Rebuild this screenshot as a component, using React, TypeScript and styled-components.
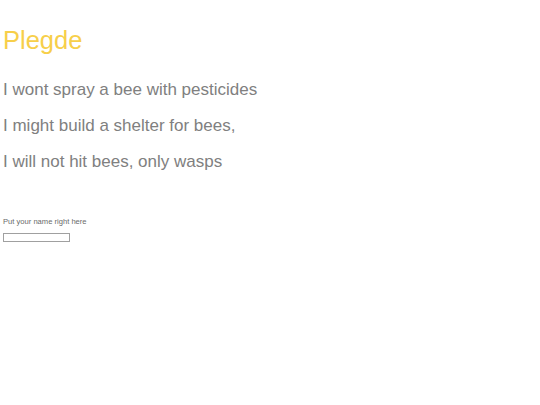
import styled, { createGlobalStyle } from "styled-components";

const Global = createGlobalStyle`
  body {
    margin: 0;
    background: #fff;
    font-family: "Liberation Sans", Arial, sans-serif;
  }
`;

const Page = styled.main`
  padding: 24px 3px 0;
`;

const Title = styled.h1`
  margin: 0 0 23px;
  font-size: 25.5px;
  font-weight: 400;
  line-height: 32px;
  color: #f7cf4a;
`;

const Lines = styled.ul`
  list-style: none;
  margin: 0;
  padding: 0;
  display: flex;
  flex-direction: column;
  gap: 14px;
`;

const Line = styled.li`
  font-size: 17px;
  line-height: 22px;
  color: #808080;
`;

const Form = styled.form`
  margin-top: 44px;
  display: flex;
  flex-direction: column;
  align-items: flex-start;
  gap: 6px;
`;

const Label = styled.label`
  font-size: 7.6px;
  line-height: 10px;
  color: #6a6a6a;
`;

const NameInput = styled.input`
  box-sizing: border-box;
  width: 67px;
  height: 9px;
  margin: 0;
  padding: 0;
  border: 1px solid #a0a0a0;
  background: #fff;
`;

const pledges = [
  "I wont spray a bee with pesticides",
  "I might build a shelter for bees,",
  "I will not hit bees, only wasps",
];

export default function App() {
  return (
    <>
      <Global />
      <Page>
        <Title>Plegde</Title>
        <Lines>
          {pledges.map((p) => (
            <Line key={p}>{p}</Line>
          ))}
        </Lines>
        <Form onSubmit={(e) => e.preventDefault()}>
          <Label htmlFor="name">Put your name right here</Label>
          <NameInput id="name" type="text" />
        </Form>
      </Page>
    </>
  );
}
